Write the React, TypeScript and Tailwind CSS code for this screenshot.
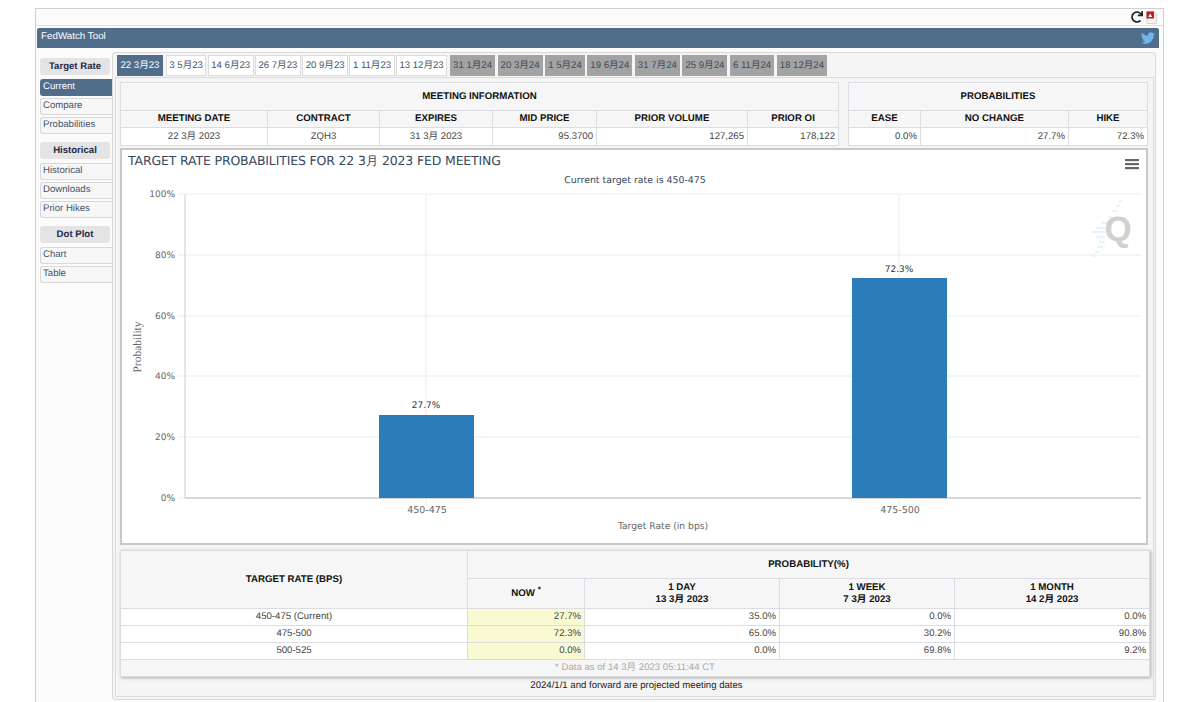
import { FaRedo, FaTwitter } from "react-icons/fa";

const sans = "font-['Liberation_Sans','Noto_Sans_CJK_SC',sans-serif] [text-rendering:geometricPrecision]";

const activeTabs = ["22 3月23", "3 5月23", "14 6月23", "26 7月23", "20 9月23", "1 11月23", "13 12月23"];
const futureTabs = ["31 1月24", "20 3月24", "1 5月24", "19 6月24", "31 7月24", "25 9月24", "6 11月24", "18 12月24"];

const nav = [
  { title: "Target Rate", items: ["Current", "Compare", "Probabilities"] },
  { title: "Historical", items: ["Historical", "Downloads", "Prior Hikes"] },
  { title: "Dot Plot", items: ["Chart", "Table"] },
];

const hist = [
  { rate: "450-475 (Current)", vals: ["27.7%", "35.0%", "0.0%", "0.0%"] },
  { rate: "475-500", vals: ["72.3%", "65.0%", "30.2%", "90.8%"] },
  { rate: "500-525", vals: ["0.0%", "0.0%", "69.8%", "9.2%"] },
];

const ticks = [
  { y: 194, label: "100%" },
  { y: 255, label: "80%" },
  { y: 316, label: "60%" },
  { y: 376, label: "40%" },
  { y: 437, label: "20%" },
  { y: 498, label: "0%" },
];

const chartFont = "'DejaVu Sans', sans-serif";

function Sidebar() {
  return (
    <div className="w-[73px] shrink-0 pt-[6px]">
      {nav.map((group) => (
        <div key={group.title} className="mb-[8.5px]">
          <div className="mb-[3.5px] flex h-[17px] w-[70px] items-center justify-center rounded-[3px] bg-[#e4e4e4] pt-[1px] text-[9.6px] font-bold text-[#1c2b4a]">
            {group.title}
          </div>
          {group.items.map((item) => (
            <div
              key={item}
              className={
                item === "Current"
                  ? "mb-[2px] flex h-[17px] items-center rounded-l-[3px] bg-[#506d8b] pt-[1px] pl-[3px] text-[9.6px] text-white"
                  : "mb-[2px] flex h-[17px] items-center rounded-l-[3px] border border-r-0 border-[#d8d8d8] bg-[#f7f7f7] pt-[1px] pl-[2px] text-[9.6px] text-[#44546a]"
              }
            >
              {item}
            </div>
          ))}
        </div>
      ))}
    </div>
  );
}

function Tabs() {
  return (
    <div className="flex h-[24px] items-start pt-[2px] pl-[2px]">
      <div className="flex gap-[1.5px]">
        {activeTabs.map((t, i) => (
          <div
            key={t}
            className={
              i === 0
                ? "mr-[1.5px] flex h-[21px] items-center bg-[#506d8b] px-[3.5px] pt-[1px] text-[9.6px] whitespace-nowrap text-white"
                : "flex h-[21px] items-center border border-[#dcdcdc] bg-white px-[2.4px] pt-[1px] text-[9.6px] whitespace-nowrap text-[#44546a]"
            }
          >
            {t}
          </div>
        ))}
      </div>
      <div className="ml-[3px] flex gap-[2.6px]">
        {futureTabs.map((t) => (
          <div key={t} className="flex h-[21px] items-center bg-[#a3a3a3] px-[3px] pt-[1px] text-[9.6px] whitespace-nowrap text-[#3c4a5c]">
            {t}
          </div>
        ))}
      </div>
    </div>
  );
}

const th = "border border-[#dcdce4] bg-[#f6f6f6] text-center text-[9.7px] leading-[11.5px] font-bold text-[#111]";
const td = "border border-[#dcdce4] bg-white px-[3px] text-[9.6px] leading-[12px] text-[#444]";

function MeetingTable() {
  return (
    <table className="w-[718px] table-fixed border-collapse">
      <colgroup>
        <col className="w-[147px]" />
        <col className="w-[112px]" />
        <col className="w-[113px]" />
        <col className="w-[104px]" />
        <col className="w-[151px]" />
        <col className="w-[91px]" />
      </colgroup>
      <tbody>
        <tr className="h-[28px]">
          <th colSpan={6} className={th}>MEETING INFORMATION</th>
        </tr>
        <tr className="h-[17px]">
          <th className={th}>MEETING DATE</th>
          <th className={th}>CONTRACT</th>
          <th className={th}>EXPIRES</th>
          <th className={th}>MID PRICE</th>
          <th className={th}>PRIOR VOLUME</th>
          <th className={th}>PRIOR OI</th>
        </tr>
        <tr className="h-[18px]">
          <td className={td + " text-center"}>22 3月 2023</td>
          <td className={td + " text-center"}>ZQH3</td>
          <td className={td + " text-center"}>31 3月 2023</td>
          <td className={td + " text-right"}>95.3700</td>
          <td className={td + " text-right"}>127,265</td>
          <td className={td + " text-right"}>178,122</td>
        </tr>
      </tbody>
    </table>
  );
}

function ProbTable() {
  return (
    <table className="w-[299px] table-fixed border-collapse">
      <colgroup>
        <col className="w-[72px]" />
        <col className="w-[148px]" />
        <col className="w-[79px]" />
      </colgroup>
      <tbody>
        <tr className="h-[28px]">
          <th colSpan={3} className={th}>PROBABILITIES</th>
        </tr>
        <tr className="h-[17px]">
          <th className={th}>EASE</th>
          <th className={th}>NO CHANGE</th>
          <th className={th}>HIKE</th>
        </tr>
        <tr className="h-[18px]">
          <td className={td + " text-right"}>0.0%</td>
          <td className={td + " text-right"}>27.7%</td>
          <td className={td + " text-right"}>72.3%</td>
        </tr>
      </tbody>
    </table>
  );
}

function Chart() {
  return (
    <div className="mt-[2px] h-[397px] w-[1028px] border-2 border-[#c8c8c8] bg-white">
      <svg width="1024" height="393" viewBox="122 150 1024 393" style={{ fontFamily: chartFont }}>
        {ticks.map((t) => (
          <g key={t.label}>
            <line x1="178" x2="1141" y1={t.y} y2={t.y} stroke="#ececec" strokeWidth="1" />
            <text x="175" y={t.y + 3} textAnchor="end" fontSize="9" fill="#666">{t.label}</text>
          </g>
        ))}
        <line x1="426" x2="426" y1="194" y2="505" stroke="#ececec" />
        <line x1="899" x2="899" y1="194" y2="505" stroke="#ececec" />
        <line x1="185" x2="185" y1="194" y2="498" stroke="#ccc" />
        <line x1="185" x2="1141" y1="498" y2="498" stroke="#ccc" strokeWidth="1.5" />
        <rect x="379" y="415" width="95" height="83" fill="#2a7db8" />
        <rect x="852" y="278" width="95" height="220" fill="#2a7db8" />
        <text x="426" y="408" textAnchor="middle" fontSize="9" fill="#333">27.7%</text>
        <text x="899" y="272" textAnchor="middle" fontSize="9" fill="#333">72.3%</text>
        <text x="427" y="513" textAnchor="middle" fontSize="9.5" fill="#666">450-475</text>
        <text x="900" y="513" textAnchor="middle" fontSize="9.5" fill="#666">475-500</text>
        <text x="663" y="529" textAnchor="middle" fontSize="9.2" fill="#666">Target Rate (in bps)</text>
        <text transform="translate(141 347) rotate(-90)" textAnchor="middle" fontSize="11.5" fill="#666" style={{ fontFamily: "'Liberation Serif', serif" }}>Probability</text>
        <text x="128" y="165" fontSize="12.5" fill="#34495e" textLength="373">TARGET RATE PROBABILITIES FOR 22 3月 2023 FED MEETING</text>
        <text x="635" y="183" textAnchor="middle" fontSize="9.4" fill="#34495e">Current target rate is 450-475</text>
        <g fill="#666">
          <rect x="1125" y="159" width="14" height="2.2" />
          <rect x="1125" y="163" width="14" height="2.2" />
          <rect x="1125" y="167" width="14" height="2.2" />
        </g>
        <g stroke="#e0f3fc" strokeWidth="1.6">
          <line x1="1119" y1="201" x2="1122" y2="201" />
          <line x1="1116" y1="206" x2="1120" y2="206" />
          <line x1="1112" y1="211" x2="1118" y2="211" />
          <line x1="1108" y1="217" x2="1112" y2="217" />
          <line x1="1101" y1="223" x2="1108" y2="223" />
          <line x1="1096" y1="228" x2="1106" y2="228" />
          <line x1="1092" y1="232" x2="1105" y2="232" />
          <line x1="1096" y1="237" x2="1105" y2="237" />
          <line x1="1099" y1="242" x2="1105" y2="242" />
          <line x1="1097" y1="247" x2="1103" y2="247" />
          <line x1="1095" y1="252" x2="1099" y2="252" />
          <line x1="1092" y1="256" x2="1095" y2="256" />
        </g>
        <text x="1118" y="241" textAnchor="middle" fontSize="35" fontWeight="700" fill="#d0d0d0" style={{ fontFamily: "'Liberation Sans', sans-serif" }}>Q</text>
      </svg>
    </div>
  );
}

function HistoryTable() {
  return (
    <table className="mt-[5px] w-[1029px] table-fixed border-collapse shadow-[1px_1px_3px_#aaa]">
      <colgroup>
        <col className="w-[347px]" />
        <col className="w-[117px]" />
        <col className="w-[195px]" />
        <col className="w-[175px]" />
        <col className="w-[195px]" />
      </colgroup>
      <tbody>
        <tr className="h-[28px]">
          <th rowSpan={2} className={th}>TARGET RATE (BPS)</th>
          <th colSpan={4} className={th}>PROBABILITY(%)</th>
        </tr>
        <tr className="h-[30px]">
          <th className={th}>NOW <sup className="text-[8px]">*</sup></th>
          <th className={th}>1 DAY<br />13 3月 2023</th>
          <th className={th}>1 WEEK<br />7 3月 2023</th>
          <th className={th}>1 MONTH<br />14 2月 2023</th>
        </tr>
        {hist.map((row) => (
          <tr key={row.rate} className="h-[17px]">
            <td className={td + " text-center"}>{row.rate}</td>
            {row.vals.map((v, i) => (
              <td key={i} className={td + " text-right" + (i === 0 ? " !bg-[#fafad2]" : "")}>{v}</td>
            ))}
          </tr>
        ))}
        <tr className="h-[17px]">
          <td colSpan={5} className="border border-[#dcdce4] bg-[#f6f6f6] text-center text-[9.6px] leading-[12px] text-[#aaa]">
            * Data as of 14 3月 2023 05:11:44 CT
          </td>
        </tr>
      </tbody>
    </table>
  );
}

export default function App() {
  return (
    <div className={"h-[702px] w-[1200px] overflow-hidden bg-white " + sans}>
      <div className="mx-[35px] mt-[8px] h-[694px] w-[1129px] border-x border-t border-[#d0d0d0] bg-[#fbfbfb]">
        <div className="flex h-[17px] items-center justify-end gap-[3px] border-b border-[#e0e0e0] pr-[6px]">
          <FaRedo className="size-[12px] text-[#222]" />
          <svg width="11" height="13" viewBox="0 0 11 13">
            <path d="M1 0.5h7l2.5 2.5v9.5H1z" fill="#f4f4f4" stroke="#c8c8c8" strokeWidth="0.7" />
            <rect x="0.5" y="0.5" width="7.5" height="7" fill="#c8161d" />
            <path d="M2.2 6l2-3.6 2 3.6z" fill="#fff" />
          </svg>
        </div>
        <div className="mx-[1px] mt-[2px] flex h-[20px] w-[1122px] items-center justify-between rounded-t-[2px] bg-[#506d8b] pr-[4px] pb-[1px] pl-[4px] text-[9.8px] text-white">
          <span>FedWatch Tool</span>
          <FaTwitter className="size-[14px] text-[#6fb7ea]" />
        </div>
        <div className="mt-[4px] flex pl-[4px]">
          <Sidebar />
          <div className="-ml-px h-[648px] w-[1044px] rounded-[3px] border border-[#d8d8d8] bg-[#f5f5f5] pl-[2px]">
            <Tabs />
            <div className="h-[620px] w-[1039px] border border-[#dcdcdc] pt-[4px] pl-[4px]">
              <div className="flex justify-between pr-[5px]">
                <MeetingTable />
                <ProbTable />
              </div>
              <Chart />
              <HistoryTable />
              <div className="mt-[2px] text-center text-[9.6px] text-[#222]">2024/1/1 and forward are projected meeting dates</div>
            </div>
          </div>
        </div>
      </div>
    </div>
  );
}
